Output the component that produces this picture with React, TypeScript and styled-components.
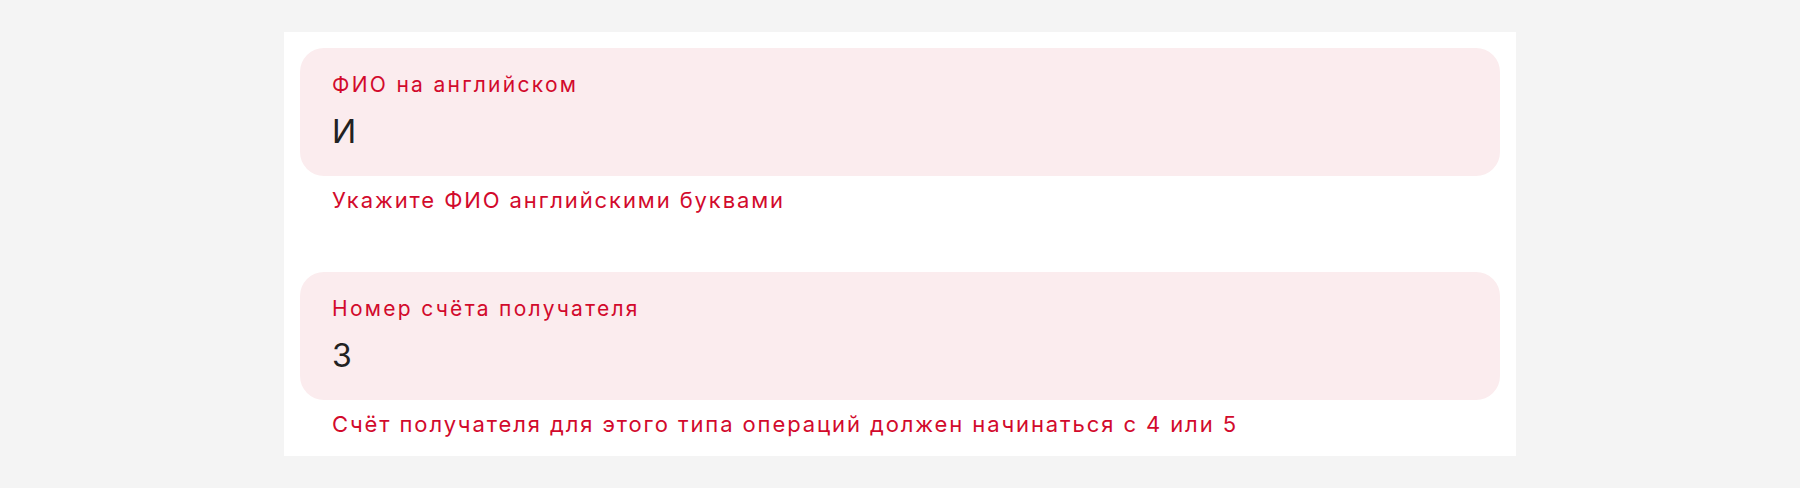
import React from "react";
import styled, { createGlobalStyle } from "styled-components";

const GlobalStyle = createGlobalStyle`
  html, body {
    margin: 0;
    padding: 0;
    background: #f4f4f4;
  }
  body {
    font-family: Inter, "Noto Sans", sans-serif;
  }
`;

const Page = styled.div`
  display: flex;
  justify-content: center;
  padding-top: 32px;
`;

const Panel = styled.div`
  width: 1232px;
  box-sizing: border-box;
  background: #ffffff;
  padding: 16px;
  display: flex;
  flex-direction: column;
  gap: 56px;
`;

const FieldGroup = styled.div`
  display: flex;
  flex-direction: column;
`;

const FieldBox = styled.div`
  height: 128px;
  box-sizing: border-box;
  background: #fbecee;
  border-radius: 24px;
  padding: 21px 32px 0;
  display: flex;
  flex-direction: column;
  gap: 11px;
`;

const Label = styled.div`
  font-size: 21px;
  line-height: 32px;
  letter-spacing: 2.3px;
  color: #d20a2c;
`;

const Value = styled.div`
  font-size: 32px;
  line-height: 40px;
  letter-spacing: 1px;
  color: #222222;
`;

const Hint = styled.div`
  margin-top: 8px;
  padding-left: 32px;
  font-size: 22px;
  line-height: 32px;
  letter-spacing: 1.9px;
  color: #d20a2c;
`;

type FieldProps = { label: string; value: string; hint: string };

const Field = ({ label, value, hint }: FieldProps) => (
  <FieldGroup>
    <FieldBox>
      <Label>{label}</Label>
      <Value>{value}</Value>
    </FieldBox>
    <Hint>{hint}</Hint>
  </FieldGroup>
);

export default function App() {
  return (
    <>
      <GlobalStyle />
      <Page>
        <Panel>
          <Field
            label="ФИО на английском"
            value="И"
            hint="Укажите ФИО английскими буквами"
          />
          <Field
            label="Номер счёта получателя"
            value="3"
            hint="Счёт получателя для этого типа операций должен начинаться с 4 или 5"
          />
        </Panel>
      </Page>
    </>
  );
}
